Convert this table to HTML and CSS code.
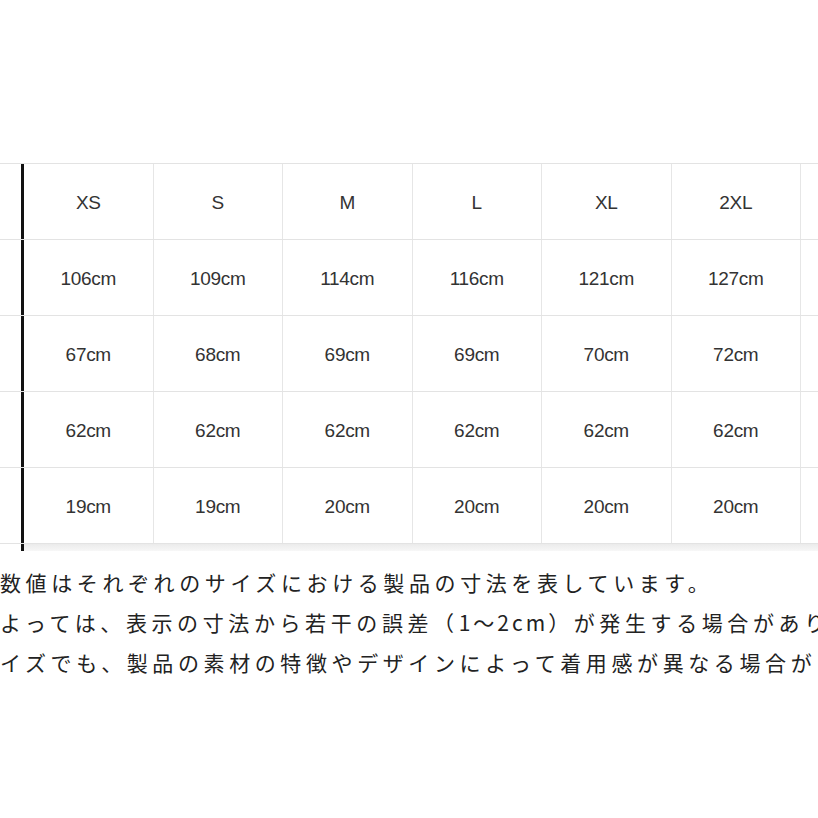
FILE: index.html
```html
<!DOCTYPE html>
<html lang="ja">
<head>
<meta charset="utf-8">
<link rel="stylesheet" href="styles.css">
</head>
<body>
<div class="page">
  <div class="size-table">
    <div class="row">
      <div class="cell label"></div>
      <div class="cell">XS</div><div class="cell">S</div><div class="cell">M</div><div class="cell">L</div><div class="cell">XL</div><div class="cell">2XL</div><div class="cell"></div>
    </div>
    <div class="row">
      <div class="cell label"></div>
      <div class="cell">106cm</div><div class="cell">109cm</div><div class="cell">114cm</div><div class="cell">116cm</div><div class="cell">121cm</div><div class="cell">127cm</div><div class="cell"></div>
    </div>
    <div class="row">
      <div class="cell label"></div>
      <div class="cell">67cm</div><div class="cell">68cm</div><div class="cell">69cm</div><div class="cell">69cm</div><div class="cell">70cm</div><div class="cell">72cm</div><div class="cell"></div>
    </div>
    <div class="row">
      <div class="cell label"></div>
      <div class="cell">62cm</div><div class="cell">62cm</div><div class="cell">62cm</div><div class="cell">62cm</div><div class="cell">62cm</div><div class="cell">62cm</div><div class="cell"></div>
    </div>
    <div class="row">
      <div class="cell label"></div>
      <div class="cell">19cm</div><div class="cell">19cm</div><div class="cell">20cm</div><div class="cell">20cm</div><div class="cell">20cm</div><div class="cell">20cm</div><div class="cell"></div>
    </div>
    <div class="row foot">
      <div class="cell label"></div>
      <div class="cell fill"></div>
    </div>
  </div>
  <div class="notes">
    <p>数値はそれぞれのサイズにおける製品の寸法を表しています。</p>
    <p>よっては、表示の寸法から若干の誤差（<span class="latin">1～2cm</span>）が発生する場合があり</p>
    <p>イズでも、製品の素材の特徴やデザインによって着用感が異なる場合が</p>
  </div>
</div>
</body>
</html>
```

FILE: styles.css
```css
html, body {
  margin: 0;
  padding: 0;
  background: #ffffff;
}

.page {
  width: 818px;
  height: 818px;
  overflow: hidden;
  padding-top: 163px;
  box-sizing: border-box;
}

.size-table {
  margin-left: -107px;
  display: flex;
  flex-direction: column;
  border-top: 1px solid #e3e3e3;
  width: 1200px;
}

.row {
  display: flex;
  height: 76px;
  border-bottom: 1px solid #e3e3e3;
  box-sizing: border-box;
}

.row.foot {
  height: 7px;
  border-bottom: none;
}

.cell {
  width: 129.5px;
  flex: 0 0 129.5px;
  box-sizing: border-box;
  border-right: 1px solid #e6e6e6;
  display: flex;
  align-items: center;
  justify-content: center;
  font-family: "Liberation Sans", Arial, sans-serif;
  font-size: 19px;
  letter-spacing: -0.3px;
  color: #333333;
  padding-top: 2px;
}

.cell.label {
  width: 131px;
  flex: 0 0 131px;
  border-right: 3px solid #111111;
}

.cell.fill {
  flex: 1 1 auto;
  border-right: none;
  background: linear-gradient(#ebebeb, #f7f7f7);
}

.notes {
  margin-top: 11px;
  font-family: "Noto Sans CJK JP", "Noto Sans", sans-serif;
  font-size: 21px;
  letter-spacing: 4.6px;
  line-height: 40px;
  color: #222222;
  white-space: nowrap;
}

.notes p {
  margin: 0;
}

.notes .latin {
  letter-spacing: 3px;
}
```
